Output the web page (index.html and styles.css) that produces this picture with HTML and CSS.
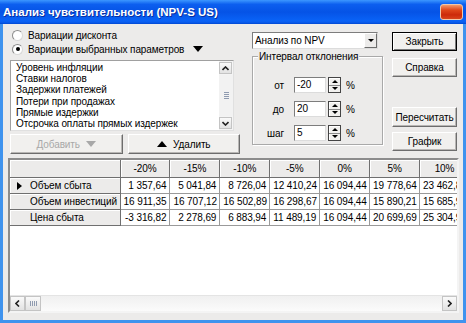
FILE: index.html
```html
<!DOCTYPE html>
<html lang="ru">

<head>
    <meta charset="UTF-8">
    <title>Анализ чувствительности</title>
    <link rel="stylesheet" href="styles.css">
</head>

<body>

    <div class="window">
        <div class="titlebar">
            <span class="title">Анализ чувствительности (NPV-S US)</span>
            <span class="close"></span>
        </div>

        <div class="client">
            <div class="top">

                <!-- параметры -->
                <div class="params">
                    <div class="radio"><span class="dot"></span>Вариации дисконта</div>
                    <div class="radio checked"><span class="dot"></span>Вариации выбранных параметров <span class="tri-down"></span></div>

                    <div class="listbox">
                        <ul class="items">
                            <li>Уровень инфляции</li>
                            <li>Ставки налогов</li>
                            <li>Задержки платежей</li>
                            <li>Потери при продажах</li>
                            <li>Прямые издержки</li>
                            <li>Отсрочка оплаты прямых издержек</li>
                        </ul>
                        <div class="vscroll">
                            <span class="sb-btn">
                                <svg width="7" height="5" viewBox="0 0 7 5"><path d="M0.5 4 L3.5 1 L6.5 4" fill="none" stroke="#222" stroke-width="1.6"/></svg>
                            </span>
                            <span class="sb-thumb">
                                <span class="grip"></span>
                            </span>
                            <span class="sb-btn">
                                <svg width="7" height="5" viewBox="0 0 7 5"><path d="M0.5 1 L3.5 4 L6.5 1" fill="none" stroke="#222" stroke-width="1.6"/></svg>
                            </span>
                        </div>
                    </div>

                    <div class="list-actions">
                        <button class="btn wide" disabled>Добавить <span class="tri-down gray"></span></button>
                        <button class="btn wide"><span class="tri-up"></span> Удалить</button>
                    </div>
                </div>

                <!-- интервал -->
                <div class="settings">
                    <div class="combo">
                        <span class="combo-text">Анализ по NPV</span>
                        <span class="combo-btn"><span class="tri-small"></span></span>
                    </div>

                    <div class="group">
                        <span class="legend">Интервал отклонения</span>
                        <div class="field">
                            <span class="lbl">от</span>
                            <span class="edit">-20</span>
                            <span class="spin"><span class="up"></span><span class="down"></span></span>
                            <span class="pct">%</span>
                        </div>
                        <div class="field">
                            <span class="lbl">до</span>
                            <span class="edit">20</span>
                            <span class="spin"><span class="up"></span><span class="down"></span></span>
                            <span class="pct">%</span>
                        </div>
                        <div class="field">
                            <span class="lbl">шаг</span>
                            <span class="edit">5</span>
                            <span class="spin"><span class="up"></span><span class="down"></span></span>
                            <span class="pct">%</span>
                        </div>
                    </div>
                </div>

                <!-- кнопки -->
                <div class="actions">
                    <button class="btn default">Закрыть</button>
                    <button class="btn help">Справка</button>
                    <button class="btn recalc">Пересчитать</button>
                    <button class="btn chart">График</button>
                </div>
            </div>

            <!-- таблица -->
            <div class="grid">
                <div class="grid-view">
                    <table class="table">
                        <colgroup>
                            <col class="c-name">
                            <col><col><col><col><col><col><col>
                        </colgroup>
                        <tr>
                            <th></th>
                            <th>-20%</th><th>-15%</th><th>-10%</th><th>-5%</th><th>0%</th><th>5%</th><th>10%</th>
                        </tr>
                        <tr>
                            <th class="row-name"><span class="marker"></span>Объем сбыта</th>
                            <td>1 357,64</td><td>5 041,84</td><td>8 726,04</td><td>12 410,24</td><td>16 094,44</td><td>19 778,64</td><td>23 462,84</td>
                        </tr>
                        <tr>
                            <th class="row-name">Объем инвестиций</th>
                            <td>16 911,35</td><td>16 707,12</td><td>16 502,89</td><td>16 298,67</td><td>16 094,44</td><td>15 890,21</td><td>15 685,98</td>
                        </tr>
                        <tr>
                            <th class="row-name">Цена сбыта</th>
                            <td>-3 316,82</td><td>2 278,69</td><td>6 883,94</td><td>11 489,19</td><td>16 094,44</td><td>20 699,69</td><td>25 304,94</td>
                        </tr>
                    </table>
                </div>
                <div class="hscroll">
                    <span class="sb-btn">
                        <svg width="5" height="7" viewBox="0 0 5 7"><path d="M4 0.5 L1 3.5 L4 6.5" fill="none" stroke="#222" stroke-width="1.6"/></svg>
                    </span>
                    <span class="sb-thumb h"><span class="grip"></span></span>
                    <span class="sb-track"></span>
                    <span class="sb-btn">
                        <svg width="5" height="7" viewBox="0 0 5 7"><path d="M1 0.5 L4 3.5 L1 6.5" fill="none" stroke="#222" stroke-width="1.6"/></svg>
                    </span>
                </div>
            </div>
        </div>
    </div>

</body>

</html>
```

FILE: styles.css
```css
* {
    box-sizing: border-box;
}

body {
    margin: 0;
    font-family: "Liberation Sans", Arial, sans-serif;
    font-size: 10px;
    letter-spacing: -0.1px;
    color: #000;
    background: #fff;
}

.window {
    width: 466px;
    height: 323px;
    display: flex;
    flex-direction: column;
    background: #3f93ee;
}

/* заголовок */
.titlebar {
    height: 24px;
    display: flex;
    align-items: flex-start;
    justify-content: space-between;
    padding: 0 3px 0 3px;
    background: linear-gradient(to bottom, #3c97ff 0%, #0c5fef 18%, #0553e6 50%, #0962f6 85%, #0a5ef0 92%, #0047d2 100%);
    color: #fff;
}

.title {
    margin-top: 6px;
    font-weight: bold;
    font-size: 11.5px;
    letter-spacing: 0;
    text-shadow: 1px 1px 0 #0a2fa0;
}

.close {
    width: 23px;
    height: 16px;
    margin-top: 4px;
    border: 1px solid #f0c7a8;
    border-radius: 3px;
    background: linear-gradient(to bottom, #f39a6a 0%, #e0481c 35%, #cc2a0a 70%, #d9431c 100%);
}

.client {
    flex: 1;
    margin: 0 3px 3px;
    background: #ecebea;
    display: flex;
    flex-direction: column;
}

.top {
    height: 134px;
    display: flex;
    padding: 4px 0 0 7px;
}

/* левая колонка */
.params {
    width: 230px;
    display: flex;
    flex-direction: column;
}

.radio {
    height: 14px;
    display: flex;
    align-items: center;
    gap: 5px;
    padding-left: 2px;
}

.dot {
    width: 11px;
    height: 11px;
    border-radius: 50%;
    background: #fff;
    border: 1px solid #8c8c8c;
    border-right-color: #d8d8d8;
    border-bottom-color: #d8d8d8;
    display: flex;
    align-items: center;
    justify-content: center;
}

.checked .dot::after {
    content: "";
    width: 4px;
    height: 4px;
    border-radius: 50%;
    background: #000;
}

.tri-down {
    display: inline-block;
    margin-left: 4px;
    border-left: 5px solid transparent;
    border-right: 5px solid transparent;
    border-top: 6px solid #000;
}

.tri-down.gray {
    border-top-color: #a8a8a8;
    margin-left: 6px;
}

.tri-up {
    display: inline-block;
    margin-right: 6px;
    border-left: 5px solid transparent;
    border-right: 5px solid transparent;
    border-bottom: 6px solid #000;
}

.listbox {
    margin-top: 4px;
    width: 224px;
    height: 71px;
    display: flex;
    background: #fff;
    border: 1px solid #a0a0a0;
    border-right-color: #e0e0e0;
    border-bottom-color: #e0e0e0;
}

.items {
    flex: 1;
    list-style: none;
    margin: 0;
    padding: 1px 0 0 5px;
    line-height: 11.2px;
    white-space: nowrap;
    overflow: hidden;
}

.vscroll {
    width: 14px;
    display: flex;
    flex-direction: column;
    background: #f4f4f4;
    padding: 1px 0;
}

.sb-btn {
    width: 13px;
    height: 12px;
    display: flex;
    align-items: center;
    justify-content: center;
    background: linear-gradient(to bottom, #fafafa, #e2e2e2);
    border: 1px solid #c4c4c4;
    flex-shrink: 0;
}

.sb-thumb {
    flex: 1;
    margin: 1px 0;
    display: flex;
    align-items: center;
    justify-content: center;
    background: #f2f2f2;
}

.grip {
    width: 5px;
    height: 7px;
    background: repeating-linear-gradient(to bottom, #8f9bb0 0 1px, transparent 1px 2px);
}

.list-actions {
    margin-top: 3px;
    display: flex;
    gap: 5px;
}

.btn {
    font-family: inherit;
    font-size: 10px;
    letter-spacing: -0.1px;
    color: #000;
    height: 19px;
    padding: 0;
    display: flex;
    align-items: center;
    justify-content: center;
    background: #f1f0ee;
    border: 1px solid;
    border-color: #fff #6d6d6d #6d6d6d #fff;
    box-shadow: inset -1px -1px #b8b6b4;
}

.btn.wide {
    width: 113px;
    height: 20px;
}

.btn:disabled {
    color: #a8a8a8;
}

/* средняя колонка */
.settings {
    width: 131px;
    margin-left: 12px;
    padding-top: 4px;
    display: flex;
    flex-direction: column;
}

.combo {
    width: 126px;
    height: 17px;
    display: flex;
    align-items: center;
    background: #fff;
    border: 1px solid #7d7d7d;
    border-right-color: #dcdcdc;
    border-bottom-color: #dcdcdc;
}

.combo-text {
    flex: 1;
    padding-left: 2px;
}

.combo-btn {
    width: 13px;
    height: 15px;
    display: flex;
    align-items: center;
    justify-content: center;
    background: #ecebea;
    border: 1px solid;
    border-color: #fff #6d6d6d #6d6d6d #fff;
}

.tri-small {
    border-left: 3px solid transparent;
    border-right: 3px solid transparent;
    border-top: 3px solid #000;
}

.group {
    position: relative;
    margin-top: 7px;
    width: 131px;
    height: 89px;
    border: 1px solid #a9a9a9;
    box-shadow: 1px 1px 0 #fff, inset 1px 1px 0 #fff;
    padding-top: 20px;
}

.legend {
    position: absolute;
    top: -6px;
    left: 5px;
    padding: 0 1px;
    background: #ecebea;
}

.field {
    height: 16px;
    margin-bottom: 8px;
    display: flex;
    align-items: center;
}

.lbl {
    width: 31px;
    text-align: right;
    margin-right: 10px;
}

.edit {
    width: 32px;
    height: 16px;
    padding-left: 2px;
    line-height: 14px;
    background: #fff;
    border: 1px solid #7d7d7d;
    border-right-color: #dcdcdc;
    border-bottom-color: #dcdcdc;
}

.spin {
    margin-left: 2px;
    width: 13px;
    height: 16px;
    display: flex;
    flex-direction: column;
    border: 1px solid #444;
    background: #f1f0ee;
    box-shadow: inset 1px 1px #fff;
}

.spin span {
    flex: 1;
    display: flex;
    align-items: center;
    justify-content: center;
}

.spin .up {
    border-bottom: 1px solid #8a8a8a;
}

.spin .up::after {
    content: "";
    border-left: 3px solid transparent;
    border-right: 3px solid transparent;
    border-bottom: 3px solid #000;
}

.spin .down::after {
    content: "";
    border-left: 3px solid transparent;
    border-right: 3px solid transparent;
    border-top: 3px solid #000;
}

.pct {
    margin-left: 5px;
}

/* правая колонка */
.actions {
    width: 65px;
    margin-left: 9px;
    padding-top: 4px;
    display: flex;
    flex-direction: column;
}

.actions .btn {
    width: 65px;
}

.btn.default {
    border-color: #000;
    box-shadow: inset 1px 1px #fff, inset -1px -1px #7a7a7a;
}

.btn.help {
    margin-top: 7px;
}

.btn.recalc {
    margin-top: 30px;
    height: 20px;
}

.btn.chart {
    margin-top: 5px;
}

/* таблица */
.grid {
    flex: 1;
    margin: 0 4px 7px 5px;
    display: flex;
    flex-direction: column;
    background: #fff;
    border: 2px solid;
    border-color: #8c8c8c #f4f4f4 #f4f4f4 #8c8c8c;
}

.grid-view {
    flex: 1;
    overflow: hidden;
}

.table {
    table-layout: fixed;
    border-collapse: collapse;
    width: 460px;
}

.c-name {
    width: 110px;
}

.table th,
.table td {
    height: 16px;
    padding: 0 3px;
    white-space: nowrap;
    overflow: hidden;
    font-weight: normal;
    border-right: 1px solid #9a9a9a;
    border-bottom: 1px solid #9a9a9a;
}

.table th {
    height: 17px;
    background: #ecebea;
    box-shadow: inset 1px 1px #fff;
    border-right-color: #6f6f6f;
    border-bottom-color: #6f6f6f;
    text-align: center;
}

.table td {
    text-align: right;
}

.table .row-name {
    height: 16px;
    text-align: left;
    padding-left: 20px;
    position: relative;
}

.marker {
    position: absolute;
    left: 7px;
    top: 4px;
    border-top: 4px solid transparent;
    border-bottom: 4px solid transparent;
    border-left: 5px solid #000;
}

.hscroll {
    height: 16px;
    display: flex;
    background: linear-gradient(to bottom, #f0f0f0, #fbfbfb);
    border-top: 1px solid #e4e4e4;
}

.hscroll .sb-btn {
    width: 15px;
    height: 15px;
}

.sb-thumb.h {
    flex: 0 0 16px;
    margin: 0;
    border: 1px solid #c4c4c4;
    background: linear-gradient(to bottom, #fafafa, #e2e2e2);
}

.sb-thumb.h .grip {
    width: 7px;
    height: 5px;
    background: repeating-linear-gradient(to right, #8f9bb0 0 1px, transparent 1px 2px);
}

.sb-track {
    flex: 1;
}
```
